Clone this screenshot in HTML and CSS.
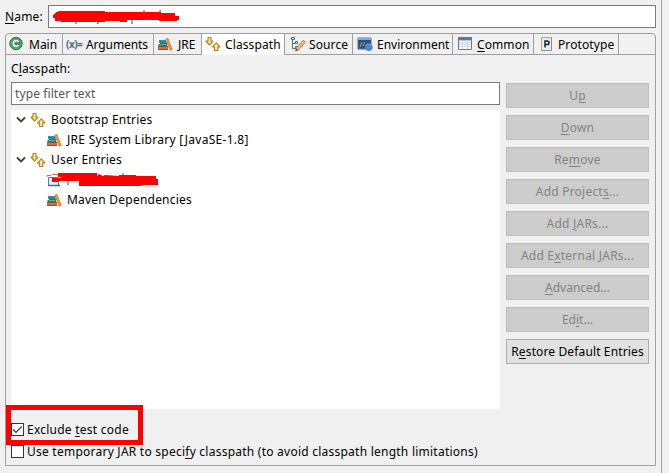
FILE: index.html
```html
<!DOCTYPE html>
<html lang="en">
<head>
<meta charset="utf-8">
<title>Run Configuration</title>
<link rel="stylesheet" href="styles.css">
</head>
<body>
<svg class="defs" width="0" height="0">
  <symbol id="books" viewBox="0 0 16 16">
    <path d="M2 4h7v2.500H2z" fill="#2b9cc4"/><path d="M2 6h7" stroke="#176583"/>
    <path d="M3 6.500h7V10H1.500V8H3z" fill="#247b68"/><path d="M3 8.500h6" stroke="#55b7a0"/>
    <path d="M1 10h10v4H1z" fill="#c4734b"/><path d="M1 10.500h10M1 13.500h10" stroke="#94502f"/>
    <path d="M8.800 3.200l2.200-.8 4.200 11-2.200.8z" fill="#eda43b" stroke="#b56d2c" stroke-width=".7"/>
  </symbol>
  <symbol id="arrows" viewBox="0 0 16 16">
    <path d="M3 1.500h3v3.500h2L4.500 9 1 5h2z" fill="#ffeaa0" stroke="#b78322" stroke-width="1.200" stroke-linejoin="round"/>
    <path d="M9.500 14.500V10.800h-2l3.800-4 3.700 4h-2.200v3.700z" fill="#ffeaa0" stroke="#b78322" stroke-width="1.200" stroke-linejoin="round"/>
  </symbol>
</svg>
<div class="dialog">
  <div class="name-row">
    <label class="name-label"><u>N</u>ame:</label>
    <div class="name-input">
      <svg width="130" height="18" viewBox="0 0 130 18"><path d="M8 4.500a4 4 0 0 0-5 4" fill="none" stroke="#222"/><path d="M25 13v3M48 14l-2 2M81 12v4M93 2v3M109 2v3" stroke="#444"/><path d="M2 7l3-2 3-2h46v1h56v1h14v3h4v4h-2v1H108v-1H76v2h-7v-1H54v1H10v-1H4v-3H2z" fill="#f00"/></svg>
    </div>
  </div>
  <div class="folder">
    <div class="tabs">
      <div class="tab t-main">
        <svg width="16" height="16" viewBox="0 0 16 16"><circle cx="8" cy="7.5" r="6.2" fill="#389457" stroke="#1d7444"/><circle cx="8" cy="7.5" r="5" fill="none" stroke="#6bb27f"/><path d="M10.4 5.9A2.8 2.8 0 1 0 10.4 9.1" fill="none" stroke="#fff" stroke-width="1.8"/></svg>
        <span>Main</span></div>
      <div class="tab t-args"><b class="var">(x)=</b><span>Arguments</span></div>
      <div class="tab t-jre"><svg width="16" height="16"><use href="#books"/></svg><span>JRE</span></div>
      <div class="tab t-class selected"><svg width="16" height="16"><use href="#arrows"/></svg><span>Classpath</span></div>
      <div class="tab t-source">
        <svg width="16" height="16" viewBox="0 0 16 16"><path d="M2.5 3v9.5H6M2.5 7.5H6" fill="none" stroke="#4c6b9c"/><path d="M1.5 1.5h3v2h-3zM5.5 5.5h2v2h-2zM5.5 10.5h2v2h-2z" fill="#dce8f8" stroke="#4c6b9c"/><path d="M13.2 4.2l2.3 2.2-7 7.6-3 1 .8-3z" fill="#f5b76c" stroke="#ad6e3c" stroke-width=".8"/><path d="M5.5 15l1-2.5 1.5 1.5z" fill="#444"/></svg>
        <span>Source</span></div>
      <div class="tab t-env">
        <svg width="16" height="16" viewBox="0 0 16 16"><path d="M1 2h13v11H1z" fill="#315072" stroke="#3f75aa"/><path d="M1 2h13v2H1z" fill="#77afe1"/><path d="M3 11l2-5M6 10l2-4" stroke="#8f9fb0"/><circle cx="11.8" cy="11.2" r="3.8" fill="#4c87c5"/><path d="M9 9.5c2-2 3-.5 5-1" stroke="#82b5dd" fill="none"/></svg>
        <span>Environment</span></div>
      <div class="tab t-common">
        <svg width="16" height="16" viewBox="0 0 16 16"><path d="M1.5 1.5h13v12h-13z" fill="#fff" stroke="#647795"/><path d="M1 1h14v3H1z" fill="#647795"/><path d="M2 4.5h12" stroke="#b5c8df"/><path d="M2 6.5h12M2 8.5h12M2 10.5h12M5.5 4v9M10.5 4v9" stroke="#c3ced8" stroke-width=".7"/></svg>
        <span><u>C</u>ommon</span></div>
      <div class="tab t-proto">
        <svg width="16" height="16" viewBox="0 0 16 16"><path d="M2.5 1.5h10v13h-10z" fill="#e2edfb" stroke="#8e8c86"/><path d="M2.5 14V1.5H12" fill="none" stroke="#b5a478"/><path d="M6 11.5V5h2.2a1.7 1.7 0 0 1 0 3.6H6" fill="none" stroke="#222" stroke-width="1.5"/></svg>
        <span>Prototype</span></div>
    </div>
    <div class="page">
      <div class="heading">C<u>l</u>asspath:</div>
      <div class="columns">
        <div class="left">
          <div class="filter"><span>type filter text</span></div>
          <div class="tree">
            <div class="row"><svg class="chev" width="10" height="8" viewBox="0 0 10 8"><path d="M1 1.5l4 4 4-4" fill="none" stroke="#404040" stroke-width="1.8"/></svg><svg width="16" height="16"><use href="#arrows"/></svg><span>Bootstrap Entries</span></div>
            <div class="row child"><svg width="16" height="16"><use href="#books"/></svg><span class="syslib">JRE System Library [JavaSE-1.8]</span></div>
            <div class="row"><svg class="chev" width="10" height="8" viewBox="0 0 10 8"><path d="M1 1.5l4 4 4-4" fill="none" stroke="#404040" stroke-width="1.8"/></svg><svg width="16" height="16"><use href="#arrows"/></svg><span>User Entries</span></div>
            <div class="row child"><svg width="114" height="16" viewBox="0 0 114 16"><path d="M2.500 5.500h10v8h-10z" fill="#e4edfb" stroke="#6079b0"/><path d="M1 5V3.500h4l1-1h6" fill="none" stroke="#a98246"/><path d="M2 13.500h12" stroke="#4169ad" stroke-width="1.500"/><path d="M22 4v9M77 1v4" stroke="#444"/><path d="M12 1h39v3l2-2 4 2 2-1 14 1v-1h17v1h20v3h2v6H97v1l-2-1v1H33v-5H13l-1 1H6V6h9V5h-3z" fill="#f00"/></svg></div>
            <div class="row child"><svg width="16" height="16"><use href="#books"/></svg><span>Maven Dependencies</span></div>
          </div>
        </div>
        <div class="buttons">
          <div class="btn"><span>U<u>p</u></span></div>
          <div class="btn"><span><u>D</u>own</span></div>
          <div class="btn"><span>Re<u>m</u>ove</span></div>
          <div class="btn"><span>Add Project<u>s</u>...</span></div>
          <div class="btn"><span>Add <u>J</u>ARs...</span></div>
          <div class="btn"><span>Add E<u>x</u>ternal JARs...</span></div>
          <div class="btn"><span class="tight"><u>A</u>dvanced...</span></div>
          <div class="btn"><span class="tight">Ed<u>i</u>t...</span></div>
          <div class="btn enabled"><span>R<u>e</u>store Default Entries</span></div>
        </div>
      </div>
      <div class="check first"><i class="box"><svg width="11" height="11" viewBox="0 0 11 11"><path d="M1.3 5.5l2.7 2.8 5.8-6" fill="none" stroke="#333" stroke-width="1.2"/></svg></i><span>Exclude <u>t</u>est code</span><div class="highlight"></div></div>
      <div class="check"><i class="box"></i><span>Use temporary JAR to speci<u>f</u>y classpath (to avoid classpath length limitations)</span></div>
    </div>
  </div>
</div>
</body>
</html>
```
FILE: styles.css
```css
* { box-sizing: border-box; }
html, body { margin: 0; height: 100%; overflow: hidden; }
body { background: #f0f0f0; color: #000; font: 12px/16px "Noto Sans", "Open Sans", sans-serif; white-space: nowrap; }
svg { display: block; flex: none; }
.defs { position: absolute; }
u { text-decoration: underline; text-decoration-thickness: 1px; text-underline-offset: 2px; }
.dialog { width: 662px; height: 473px; border-right: 1px solid #a0a0a0; padding: 5px 5px 0 5px; }
.name-row { display: flex; height: 23px; align-items: center; }
.name-label { width: 43px; letter-spacing: .15px; }
.name-input { width: 608px; height: 23px; border: 1px solid #7a7a7a; background: #fff; padding: 2px 0 0 2px; }
.folder { width: 651px; height: 433px; margin-top: 5px; border: 1px solid #a0a0a0; border-radius: 4px 4px 0 0; }
.tabs { display: flex; height: 21px; border-bottom: 1px solid #a0a0a0; }
.tab { display: flex; align-items: center; border-right: 1px solid #a0a0a0; padding-left: 3px; height: 20px; }
.tab span { margin-left: 7px; position: relative; top: 1px; }
.tab svg { margin-top: -1px; }
.t-main { width: 57px; padding-left: 2px; }
.t-main span { margin-left: 5px; }
.t-args { width: 91px; }
.t-args span { margin-left: 4px; letter-spacing: -.1px; }
.var { width: 16px; color: #53658b; font-size: 10px; letter-spacing: -.5px; }
.t-jre { width: 48px; }
.t-jre span { margin-left: 5px; }
.t-class { width: 83px; }
.t-class span { margin-left: 4px; top: 0; letter-spacing: .1px; }
.t-source { width: 68px; padding-left: 5px; }
.t-source span { margin-left: 3px; letter-spacing: .1px; }
.t-env { width: 100px; padding-left: 4px; }
.t-env span { margin-left: 4px; }
.t-common { width: 81px; padding-left: 4px; }
.t-common span { margin-left: 4px; letter-spacing: .1px; }
.t-proto { width: 85px; padding-left: 5px; }
.t-proto span { margin-left: 3px; letter-spacing: .1px; }
.tab.selected { background: #fff; height: 21px; }
.page { padding: 6px 6px 0 5px; }
.heading { height: 21px; letter-spacing: .15px; }
.columns { display: flex; gap: 6px; height: 327px; }
.left { width: 489px; }
.filter { height: 23px; border: 1px solid #7a7a7a; background: #fff; color: #555; padding: 3px 0 0 3px; letter-spacing: .1px; }
.tree { height: 299px; margin-top: 5px; background: #fff; }
.row { display: flex; align-items: center; height: 20px; padding-left: 5px; letter-spacing: .22px; }
.chev { margin-right: 4px; }
.row span { margin-left: 5px; }
.syslib { letter-spacing: .29px; }
.child { padding-left: 35px; }
.buttons { width: 143px; display: flex; flex-direction: column; gap: 7px; padding-top: 1px; }
.btn { height: 25px; border: 1px solid #bfbfbf; background: #ccc; color: #838383; display: flex; justify-content: center; align-items: center; flex: none; letter-spacing: .22px; }
.btn.enabled { background: #e1e1e1; border-color: #adadad; color: #000; letter-spacing: .13px; }
.tight { letter-spacing: 0; }
.check { position: relative; display: flex; align-items: center; height: 22px; letter-spacing: .24px; }
.check.first { margin-top: 10px; }
.box { width: 13px; height: 13px; border: 1px solid #333; background: #fff; margin: -1px 3px 0 0; }
.highlight { position: absolute; left: -5px; top: -14px; width: 137px; height: 40px; border: 5px solid #f00; }
```
